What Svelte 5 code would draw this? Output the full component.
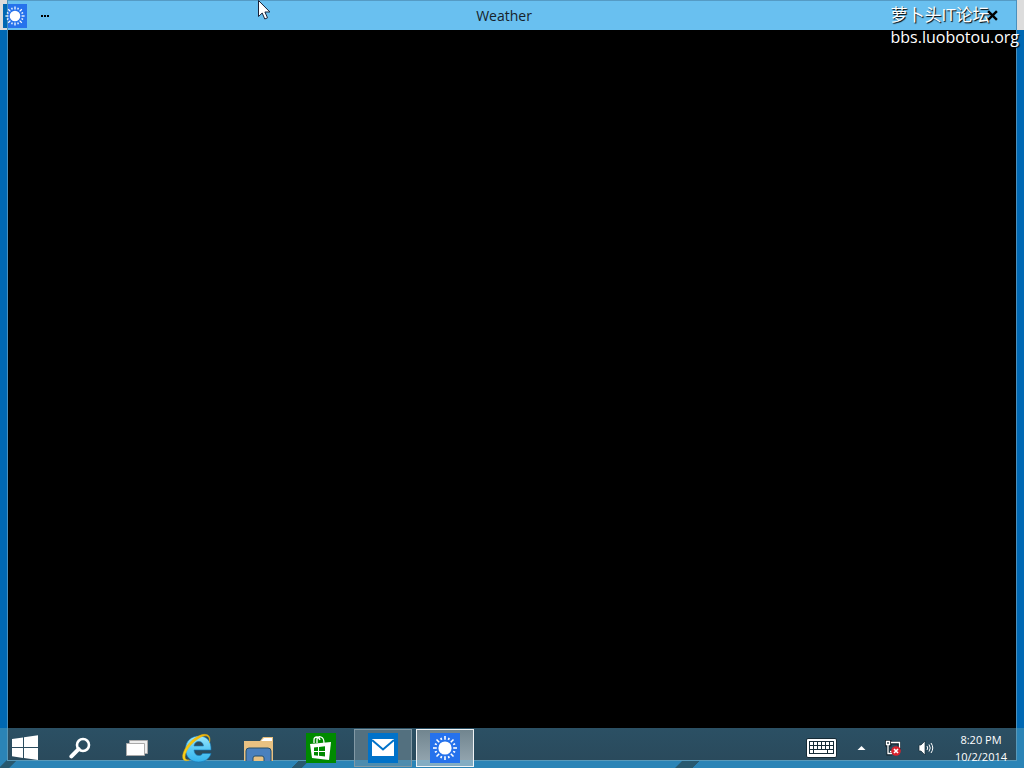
<script>
  const time = '8:20 PM';
  const date = '10/2/2014';
  const rays = Array.from({ length: 16 }, (_, i) => i * 22.5);
  const keys = [0, 1, 2, 3, 4, 5];
</script>

{#snippet sun()}
  <svg class="sun" viewBox="0 0 30 30" aria-hidden="true">
    <circle cx="15" cy="15" r="6.6" fill="#fff" />
    {#each rays as angle, i}
      <line x1="15" y1={i % 2 ? 6.2 : 6.8} x2="15" y2={i % 2 ? 4 : 3} stroke="#fff" stroke-width="1.6" transform="rotate({angle} 15 15)" />
    {/each}
  </svg>
{/snippet}

<div class="desktop">
  <main class="window">
    <header class="titlebar">
      <div class="left">
        <span class="tile app-icon">{@render sun()}</span>
        <button class="more" type="button" aria-label="App commands">
          <svg viewBox="0 0 8 2"><path d="M0 0h2v2H0zM3 0h2v2H3zM6 0h2v2H6z" fill="#000" /></svg>
        </button>
      </div>
      <h1>Weather</h1>
      <button class="close" type="button" aria-label="Close">
        <svg viewBox="0 0 10 10"><path d="M1 1l8 8M9 1l-8 8" stroke="#000" stroke-width="2.2" /></svg>
      </button>
    </header>
    <section class="content" aria-label="Weather content"></section>
  </main>

  <footer class="taskbar">
    <nav class="apps">
      <button class="start" type="button" aria-label="Start">
        <svg width="26" height="26" viewBox="0 0 26 26" fill="#fff">
          <path d="M0 4l11-1.6V12H0zM12 2.2L26 .3V12H12zM0 13h11v9.900L0 21.200zM12 13h14v12L12 23z" />
        </svg>
      </button>
      <button class="search" type="button" aria-label="Search">
        <svg width="22" height="22" viewBox="0 0 22 22" fill="none">
          <circle cx="14" cy="8" r="6" stroke="#fff" stroke-width="2.6" />
          <path d="M9.600 12.200L2.400 19.400" stroke="#fff" stroke-width="4" stroke-linecap="round" />
        </svg>
      </button>
      <button class="views" type="button" aria-label="Task view">
        <svg width="22" height="18" viewBox="0 0 22 18" stroke="#aaa">
          <path d="M3.500 1.500h18v13h-18z" fill="#eee" />
          <path d="M.5 4.500h18v12H.5z" fill="#fff" />
        </svg>
      </button>
      <button class="task" type="button" aria-label="Internet Explorer">
        <svg width="32" height="32" viewBox="0 0 32 32" fill="none">
          <defs>
            <linearGradient id="ie" x1="0" y1="0" x2="0" y2="1">
              <stop offset="0" stop-color="#9be8fb" />
              <stop offset=".5" stop-color="#5bcaf5" />
              <stop offset="1" stop-color="#35b3ed" />
            </linearGradient>
            <linearGradient id="ring" x1="0" y1="1" x2="1" y2="0">
              <stop offset="0" stop-color="#fbd51b" />
              <stop offset="1" stop-color="#f3b500" />
            </linearGradient>
          </defs>
          <path fill-rule="evenodd" d="M30 21.500C28.500 26.500 24 30 17.500 30 10 30 4.500 25 4.500 17S10.500 4 18 4c8 0 12.500 5.500 12 14H13c.2 3.500 2 5.500 4.800 5.500 1.900 0 3-.6 3.800-2zM13 14h9.500c-.3-3-2-4.500-4.700-4.500S13.400 11.100 13 14z" fill="url(#ie)" stroke="#1678b8" stroke-width=".6" />
          <path d="M28.500 10.500C30.500 3.500 26 .5 18.500 3.500 8.500 8 .5 19.500 1.800 26c.6 3 3.500 3.300 6.500 2-2.700.3-4.300-.8-4.300-3C4 18 12.500 8.700 20 5c5.500-2.500 9-1 8.500 5.500z" fill="url(#ring)" stroke="#e8b010" stroke-width=".5" />
        </svg>
      </button>
      <button class="task" type="button" aria-label="File Explorer">
        <svg class="folder" width="30" height="24" viewBox="0 0 30 24">
          <path d="M16 4l3-4h10v6H16z" fill="#e8bf7c" />
          <path d="M17 4l3-3h8v3z" fill="#fff" />
          <path d="M0 4h29v20H0z" fill="#e8c182" />
          <path d="M2 25V14q0-3 3-3h19q3 0 3 3v11h-7v-4q0-2-2-2h-7q-2 0-2 2v4z" fill="#4a80bd" stroke="#264e68" />
        </svg>
      </button>
      <button class="task" type="button" aria-label="Store">
        <span class="tile store">
          <svg viewBox="0 0 30 30">
            <path d="M8 10V7q0-3 3-3 2 0 3 3M11 10V6q1-3 4-2 3 1 3 6" fill="none" stroke="#fff" stroke-width="1.300" />
            <path d="M4 11l21-2-2 18-17-2z" fill="#fff" />
            <path d="M8 14.500l4-.5v4H8zM13 14l6-.8V18h-6zM8 19h4v3.700l-4-.4zM13 19h6v4.500l-6-.7z" fill="#008a00" />
          </svg>
        </span>
      </button>
      <button class="task running" type="button" aria-label="Mail">
        <span class="tile mail">
          <svg viewBox="0 0 30 30">
            <path d="M4 6h22v17H4z" fill="#fff" />
            <path d="M4 7l11 9.500L26 7" fill="none" stroke="#0072c9" stroke-width="2" />
          </svg>
        </span>
      </button>
      <button class="task running active" type="button" aria-label="Weather">
        <span class="tile">{@render sun()}</span>
      </button>
    </nav>

    <div class="tray">
      <button type="button" aria-label="Touch keyboard">
        <svg width="31" height="20" viewBox="0 0 31 20">
          <rect x=".5" y=".5" width="30" height="19" rx="1.500" fill="#fff" stroke="#162b36" />
          <path d="M3 3h25v13H3z" fill="#162b36" />
          {#each keys as k}
            <path d="M{4 + k * 4} 4h3v3h-3zM{4 + k * 4} 8h3v3h-3z" fill="#fff" />
          {/each}
          <path d="M4 12h3v3H4zM8 12h13v3H8zM22 12h5v3h-5z" fill="#fff" />
        </svg>
      </button>
      <button class="caret" type="button" aria-label="Show hidden icons">
        <svg width="9" height="6" viewBox="0 0 9 6"><path d="M4.500 1L8.500 5h-8z" fill="#fff" /></svg>
      </button>
      <button type="button" aria-label="Network disconnected">
        <svg width="16" height="16" viewBox="0 0 16 16" fill="none">
          <path d="M5 3h9v7M3 5v9h4M1 1h4v4H1zM5 11h5" stroke="#12232c" stroke-width="3" />
          <path d="M6 2.500h8.500V8M3 5v8.500h4M1.500 1.500h3v3h-3zM5 11.500h3" stroke="#fff" stroke-width="1.300" />
          <circle cx="11" cy="11" r="4.800" fill="#d8232e" />
          <path d="M9 9l4 4M13 9l-4 4" stroke="#fff" stroke-width="1.600" />
        </svg>
      </button>
      <button type="button" aria-label="Volume">
        <svg width="16" height="16" viewBox="0 0 16 16" fill="none">
          <path d="M1 5h2l4-4v14l-4-4H1z" fill="#fff" stroke="#162b36" stroke-width=".7" />
          <path d="M9 6q1.500 2 0 4M11 4.500q2.500 3.500 0 7M13 3q3.500 5 0 10" stroke="#fff" />
        </svg>
      </button>
      <button class="clock" type="button">
        <span>{time}</span>
        <span>{date}</span>
      </button>
    </div>
  </footer>

  <div class="watermark">
    <span class="forum">萝卜头IT论坛</span>
    <span>bbs.luobotou.org</span>
  </div>

  <svg class="cursor" width="13" height="20" viewBox="0 0 13 20" aria-hidden="true">
    <path d="M.5.5v16l3.700-3.500 2.600 6 2.700-1.200-2.600-5.800h5z" fill="#fff" stroke="#1a2238" />
  </svg>
</div>

<style>
  :global(body) { margin: 0; }

  .desktop {
    position: relative;
    min-height: 100vh;
    display: flex;
    flex-direction: column;
    overflow: hidden;
    background: linear-gradient(#dcdcdc 30px, #0068b3 30px);
    font-family: "Open Sans", "Noto Sans", "Noto Sans CJK SC", sans-serif;
  }

  button {
    display: flex;
    align-items: center;
    justify-content: center;
    padding: 0;
    border: 0;
    background: none;
    font: inherit;
  }
  svg { display: block; flex: none; }

  .window {
    flex: 1;
    display: flex;
    flex-direction: column;
    margin: 0 7px;
    border: solid #4a90bd;
    border-width: 0 1px;
  }
  .titlebar {
    display: grid;
    grid-template-columns: 1fr auto 1fr;
    align-items: center;
    height: 30px;
    box-sizing: border-box;
    border-top: 1px solid #559bc5;
    background: #69c0f0;
  }
  .left { display: flex; align-items: center; }
  .tile { display: block; width: 30px; height: 30px; background: #2672ec; }
  .tile svg { width: 100%; height: 100%; }
  .app-icon { width: 24px; height: 24px; margin-left: -5px; background: linear-gradient(90deg, #0068b3 4px, #4a90bd 4px, #4a90bd 5px, #2672ec 5px); }
  .more { width: 20px; height: 24px; margin-left: 8px; }
  .more svg { width: 8px; height: 2px; }
  h1 { margin: 0; font-size: 14px; line-height: 20px; font-weight: 400; color: #17222b; padding-right: 16px; }
  .close { justify-self: end; width: 48px; height: 28px; }
  .close svg { width: 11px; height: 11px; }
  .content { flex: 1; background: #000; }

  .taskbar {
    display: flex;
    justify-content: space-between;
    height: 40px;
    background:
      linear-gradient(#2b5064, #2a4a5c) 8px 0 / calc(100% - 16px) 32px no-repeat,
      linear-gradient(90deg, #5999b9, #5999b9) 7px 0 / calc(100% - 14px) 33px no-repeat,
      linear-gradient(135deg, transparent 38%, #28596f 39%, #28596f 61%, transparent 62%) -6px 100% / 32px 12px no-repeat,
      linear-gradient(135deg, transparent 48%, #28596f 49%, #28596f 72%, transparent 73%) 282px 100% / 32px 12px no-repeat,
      linear-gradient(135deg, transparent 38%, #28596f 39%, #28596f 72%, transparent 73%) 667px 100% / 40px 12px no-repeat,
      #2b84b6;
  }
  .apps { display: flex; align-items: center; gap: 4px; }
  .start { width: 50px; height: 40px; }
  .search { width: 52px; height: 40px; }
  .views { width: 54px; height: 40px; }
  .task { width: 58px; height: 38px; box-sizing: border-box; }
  .folder { margin-top: 2px; }
  .store { background: #008a00; }
  .mail { background: #0072c9; }
  .running { border: 1px solid #8299a5; background: linear-gradient(#53707f 30px, #4d8cae 30px); }
  .active { border-color: #f0f3f5; background: linear-gradient(#71858f, #91a3ad 30px, #83adc3 30px); }

  .tray { display: flex; align-items: center; gap: 17px; }
  .caret { width: 14px; }
  .clock {
    flex-direction: column;
    width: 60px;
    margin-right: 13px;
    font-size: 11px;
    line-height: 17px;
    color: #fff;
  }

  .watermark {
    position: absolute;
    top: 4px;
    right: 5px;
    display: flex;
    flex-direction: column;
    font-size: 16px;
    line-height: 22px;
    color: #fff;
    text-shadow: 1px 1px 1px #000;
    pointer-events: none;
  }
  .forum { font-size: 17px; }
  .cursor { position: absolute; top: 0; left: 258px; }
</style>
